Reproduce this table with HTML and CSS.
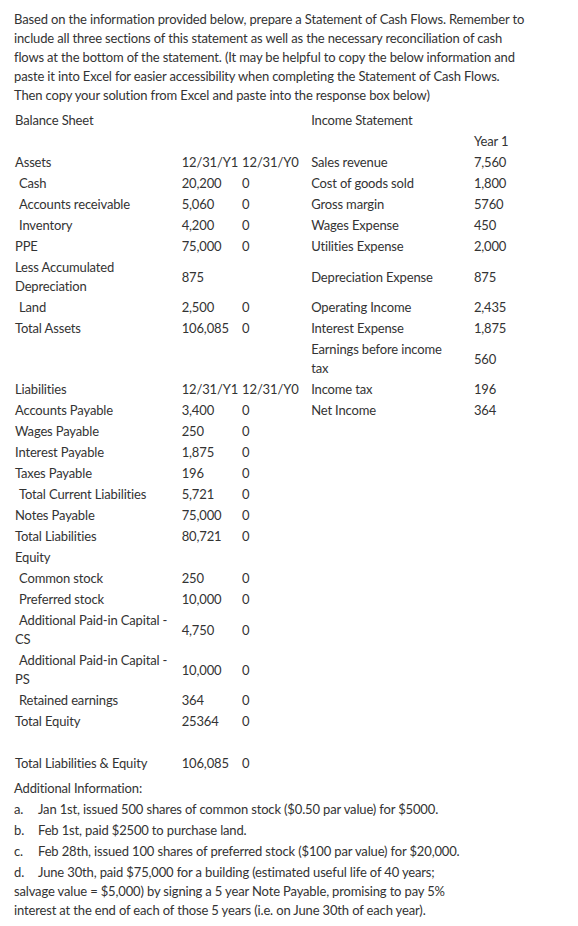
FILE: index.html
```html
<!DOCTYPE html>
<html>
<head>
<meta charset="utf-8">
<link rel="stylesheet" href="styles.css">
</head>
<body>
<div class="page">
  <p class="intro">Based on the information provided below, prepare a Statement of Cash Flows. Remember to include all three sections of this statement as well as the necessary reconciliation of cash flows at the bottom of the statement. (It may be helpful to copy the below information and paste it into Excel for easier accessibility when completing the Statement of Cash Flows. Then copy your solution from Excel and paste into the response box below)</p>
  <table class="sheet">
    <colgroup>
      <col class="c-label"><col class="c-y1"><col class="c-y0"><col class="c-label2"><col class="c-val">
    </colgroup>
    <tr><td>Balance Sheet</td><td></td><td></td><td>Income Statement</td><td></td></tr>
    <tr><td>&nbsp;</td><td></td><td></td><td></td><td>Year 1</td></tr>
    <tr><td>Assets</td><td>12/31/Y1</td><td>12/31/Y0</td><td>Sales revenue</td><td>7,560</td></tr>
    <tr><td class="ind">Cash</td><td>20,200</td><td>0</td><td>Cost of goods sold</td><td>1,800</td></tr>
    <tr><td class="ind">Accounts receivable</td><td>5,060</td><td>0</td><td>Gross margin</td><td>5760</td></tr>
    <tr><td class="ind">Inventory</td><td>4,200</td><td>0</td><td>Wages Expense</td><td>450</td></tr>
    <tr><td>PPE</td><td>75,000</td><td>0</td><td>Utilities Expense</td><td>2,000</td></tr>
    <tr><td>Less Accumulated<br>Depreciation</td><td>875</td><td></td><td>Depreciation Expense</td><td>875</td></tr>
    <tr><td class="ind">Land</td><td>2,500</td><td>0</td><td>Operating Income</td><td>2,435</td></tr>
    <tr><td>Total Assets</td><td>106,085</td><td>0</td><td>Interest Expense</td><td>1,875</td></tr>
    <tr><td></td><td></td><td></td><td>Earnings before income<br>tax</td><td>560</td></tr>
    <tr><td>Liabilities</td><td>12/31/Y1</td><td>12/31/Y0</td><td>Income tax</td><td>196</td></tr>
    <tr><td>Accounts Payable</td><td>3,400</td><td>0</td><td>Net Income</td><td>364</td></tr>
    <tr><td>Wages Payable</td><td>250</td><td>0</td><td></td><td></td></tr>
    <tr><td>Interest Payable</td><td>1,875</td><td>0</td><td></td><td></td></tr>
    <tr><td>Taxes Payable</td><td>196</td><td>0</td><td></td><td></td></tr>
    <tr><td class="ind">Total Current Liabilities</td><td>5,721</td><td>0</td><td></td><td></td></tr>
    <tr><td>Notes Payable</td><td>75,000</td><td>0</td><td></td><td></td></tr>
    <tr><td>Total Liabilities</td><td>80,721</td><td>0</td><td></td><td></td></tr>
    <tr><td>Equity</td><td></td><td></td><td></td><td></td></tr>
    <tr><td class="ind">Common stock</td><td>250</td><td>0</td><td></td><td></td></tr>
    <tr><td class="ind">Preferred stock</td><td>10,000</td><td>0</td><td></td><td></td></tr>
    <tr><td class="ind">Additional Paid-in Capital -<br>CS</td><td>4,750</td><td>0</td><td></td><td></td></tr>
    <tr><td class="ind">Additional Paid-in Capital -<br>PS</td><td>10,000</td><td>0</td><td></td><td></td></tr>
    <tr><td class="ind">Retained earnings</td><td>364</td><td>0</td><td></td><td></td></tr>
    <tr><td>Total Equity</td><td>25364</td><td>0</td><td></td><td></td></tr>
    <tr><td>&nbsp;</td><td></td><td></td><td></td><td></td></tr>
    <tr><td>Total Liabilities &amp; Equity</td><td>106,085</td><td>0</td><td></td><td></td></tr>
  </table>
  <p class="addl">Additional Information:</p>
  <p class="item"><span class="mark">a.</span>Jan 1st, issued 500 shares of common stock ($0.50 par value) for $5000.</p>
  <p class="item"><span class="mark">b.</span>Feb 1st, paid $2500 to purchase land.</p>
  <p class="item"><span class="mark">c.</span>Feb 28th, issued 100 shares of preferred stock ($100 par value) for $20,000.</p>
  <p class="item"><span class="mark">d.</span>June 30th, paid $75,000 for a building (estimated useful life of 40 years;<br>salvage value = $5,000) by signing a 5 year Note Payable, promising to pay 5%<br>interest at the end of each of those 5 years (i.e. on June 30th of each year).</p>
</div>
</body>
</html>
```

FILE: styles.css
```css
html, body {
  margin: 0;
  padding: 0;
  background: #ffffff;
}
body {
  font-family: Lato, "Open Sans", sans-serif;
  font-size: 13px;
  line-height: 19px;
  letter-spacing: -0.15px;
  color: #333333;
}
.page {
  padding: 10px 14px 0 14px;
  width: 514px;
}
.intro {
  margin: 0 0 5px 0;
}
.sheet {
  border-collapse: collapse;
  table-layout: fixed;
  margin-left: -1px;
}
.sheet td {
  padding: 1px 2px;
  vertical-align: middle;
  white-space: nowrap;
}
.c-label { width: 169px; }
.c-y1 { width: 58px; }
.c-y0 { width: 71px; }
.c-label2 { width: 169px; }
.c-val { width: 60px; }
.sheet td.ind {
  text-indent: 4px;
}
.addl {
  margin: 5px 0 2px 0;
}
.item {
  margin: 0 0 2px 0;
}
.mark {
  display: inline-block;
  width: 24px;
}
```
